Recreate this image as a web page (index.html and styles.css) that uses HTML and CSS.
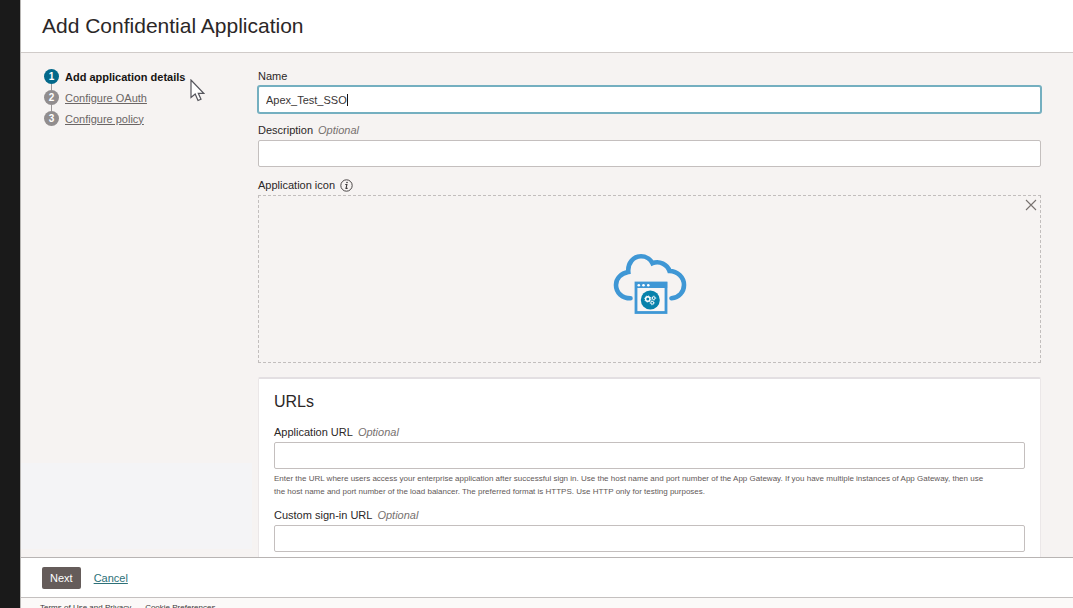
FILE: index.html
```html
<!DOCTYPE html>
<html lang="en">
<head>
<meta charset="utf-8">
<title>Add Confidential Application</title>
<meta name="viewport" content="width=device-width, initial-scale=1">
<link rel="stylesheet" href="styles.css">
</head>
<body class="page">
<div class="panel">
  <header class="panel-header">
    <h1 class="title">Add Confidential Application</h1>
  </header>
  <div class="workspace">
    <nav class="sidebar" aria-label="Steps">
      <ol class="steps">
        <li class="step step-current" aria-current="step"><span class="step-number">1</span><span class="step-name">Add application details</span></li>
        <li class="step"><span class="step-number">2</span><a class="step-name" href="#oauth">Configure OAuth</a></li>
        <li class="step"><span class="step-number">3</span><a class="step-name" href="#policy">Configure policy</a></li>
      </ol>
      <svg class="pointer" width="15" height="23" viewBox="0 0 15 23" aria-hidden="true">
        <path d="M1 1V18.500L5.200 15L8 21.500L11 20.200L8.300 14.300H13.700Z" fill="#fff" stroke="#55555c" stroke-width="1.200"/>
      </svg>
    </nav>
    <main class="form">
      <div class="field">
        <label class="label" for="name">Name</label>
        <div class="input input-focused"><input class="input-inner" id="name" type="text" value="Apex_Test_SSO" size="13"><span class="caret"></span></div>
      </div>
      <div class="field">
        <label class="label" for="description">Description <em class="optional">Optional</em></label>
        <input class="input" id="description" type="text">
      </div>
      <div class="field field-icon">
        <div class="label" id="icon-label">Application icon
          <svg class="info" width="13" height="13" viewBox="0 0 13 13" role="img" aria-label="Information">
            <circle cx="6.500" cy="6.500" r="5.700" fill="none" stroke="#4a4646"/>
            <circle cx="7" cy="3.500" r=".8" fill="#3a3636"/>
            <path d="M5.300 5.500H6.900L6 9.400H7.600" fill="none" stroke="#3a3636" stroke-width="1.100"/>
          </svg>
        </div>
        <div class="dropzone" role="group" aria-labelledby="icon-label">
          <svg class="app-icon" width="74" height="62" viewBox="23 13 74 62" aria-hidden="true">
            <path d="M40.500 58.300C32 58.300 26 52.500 26 45C26 38.300 31 33.300 38.300 32C37.500 23 43.500 16.300 51 16.300C57 16.300 61 20 62.500 23.200C69.500 20.300 77.500 24.500 79.500 31C87.500 31 94 37.500 94 45C94 52 89 57.500 81.500 58.300" fill="none" stroke="#3f97d5" stroke-width="4.600" stroke-linecap="round" stroke-linejoin="miter"/>
            <rect x="46" y="43" width="30" height="29.500" fill="#f8f6f5" stroke="#3f97d5" stroke-width="2.800"/>
            <path d="M45 42H77.200V48H45Z" fill="#3f97d5"/>
            <g fill="#fff"><circle cx="48.800" cy="45.300" r="1.300"/><circle cx="53.500" cy="45.300" r="1.300"/><circle cx="58.300" cy="45.300" r="1.300"/></g>
            <circle cx="60.300" cy="60" r="9.500" fill="#0782ab"/>
            <g fill="none" stroke="#fff">
              <circle cx="57.800" cy="59" r="2.200" stroke-width="1.400"/>
              <circle cx="57.800" cy="59" r="3.100" stroke-width=".8" stroke-dasharray="1.200 1.200"/>
              <circle cx="63.700" cy="58.100" r="1.400"/>
              <circle cx="63.700" cy="58.100" r="2.100" stroke-width=".6" stroke-dasharray=".8 .8"/>
              <circle cx="62.200" cy="62.800" r="1.400"/>
              <circle cx="62.200" cy="62.800" r="2.100" stroke-width=".6" stroke-dasharray=".8 .8"/>
            </g>
          </svg>
          <button class="clear" type="button" aria-label="Remove icon">
            <svg width="12" height="12" viewBox="0 0 12 12" aria-hidden="true"><path d="M1 1L11 11M11 1L1 11" stroke="#77716e" stroke-width="1.100"/></svg>
          </button>
        </div>
      </div>
      <section class="card">
        <h2 class="card-title">URLs</h2>
        <div class="field">
          <label class="label" for="app-url">Application URL <em class="optional">Optional</em></label>
          <input class="input" id="app-url" type="text" aria-describedby="app-url-help">
          <p class="help" id="app-url-help">Enter the URL where users access your enterprise application after successful sign in. Use the host name and port number of the App Gateway. If you have multiple instances of App Gateway, then use the host name and port number of the load balancer. The preferred format is HTTPS. Use HTTP only for testing purposes.</p>
        </div>
        <div class="field">
          <label class="label" for="signin-url">Custom sign-in URL <em class="optional">Optional</em></label>
          <input class="input" id="signin-url" type="text">
        </div>
      </section>
    </main>
  </div>
  <div class="actions">
    <button class="next" type="button">Next</button>
    <a class="cancel" href="#cancel">Cancel</a>
  </div>
  <footer class="legal">
    <a class="legal-link" href="#terms">Terms of Use and Privacy</a>
    <a class="legal-link" href="#cookies">Cookie Preferences</a>
  </footer>
</div>
</body>
</html>
```
FILE: styles.css
```css
* { box-sizing: border-box; }

.page {
  margin: 0;
  height: 100vh;
  overflow: hidden;
  padding-left: 20px;
  background: #1a1a1a;
  color: #2b2727;
  font: 11px/14px "Liberation Sans", Arial, sans-serif;
}

.panel {
  display: flex;
  flex-direction: column;
  height: 100%;
  border-left: 1px solid #b8b6b4;
  background: #fff;
}

.panel-header {
  flex: none;
  padding: 12px 21px;
  border-bottom: 1px solid #d0cbc9;
}

.title {
  margin: 0;
  font-size: 21px;
  line-height: 28px;
  font-weight: 400;
}

.workspace {
  flex: 1;
  min-height: 0;
  overflow: hidden;
  display: grid;
  grid-template-columns: 237px 1fr;
  grid-template-rows: 100%;
  background: #f6f3f2;
}

.sidebar {
  position: relative;
  padding: 16px 21px;
  background: linear-gradient(#f4f4f6, #f4f4f6) left bottom 8px / 231px 86px no-repeat;
}

.steps {
  display: flex;
  flex-direction: column;
  gap: 6px;
  margin: 0;
  padding: 0;
  list-style: none;
}

.step {
  position: relative;
  display: flex;
  align-items: center;
  gap: 6px;
  height: 15px;
  padding-left: 2px;
}

.step + .step::before {
  content: "";
  position: absolute;
  left: 9px;
  top: -6px;
  height: 6px;
  border-left: 1px solid #9a9696;
}

.step-number {
  width: 15px;
  height: 15px;
  border-radius: 50%;
  background: #918d8e;
  color: #fff;
  font-weight: 700;
  font-size: 10px;
  line-height: 15px;
  text-align: center;
}

.step-name { color: #6b6665; }

.step-current .step-number { background: #03688a; }

.step-current .step-name {
  color: #161313;
  font-weight: 700;
}

.pointer {
  position: absolute;
  left: 169px;
  top: 26px;
}

.form {
  padding: 16px 32px 0 0;
  min-width: 0;
}

.field {
  display: flex;
  flex-direction: column;
  gap: 3px;
  margin-bottom: 10px;
}

.label {
  display: flex;
  align-items: center;
  gap: 5px;
  height: 14px;
}

.optional { color: #77716f; }

.input {
  width: 100%;
  height: 27px;
  padding: 0 7px;
  border: 1px solid #c4bfbe;
  border-radius: 2px;
  background: #fff;
  color: #3a3636;
  font: inherit;
}

.input-focused {
  display: flex;
  align-items: center;
  border-color: #74afc0;
  box-shadow: 0 0 0 1px #74afc0;
}

.input-inner {
  field-sizing: content;
  padding: 0;
  border: 0;
  outline: 0;
  background: none;
  color: inherit;
  font: inherit;
}

.caret {
  height: 12px;
  border-left: 1px solid #161313;
}

.field-icon { margin: 11px 0 14px; }

.dropzone {
  position: relative;
  display: flex;
  justify-content: center;
  padding: 57px 0 47px;
  border: 1px dashed #c2bebd;
}

.app-icon { display: block; }

.clear {
  position: absolute;
  top: 3px;
  right: 3px;
  display: flex;
  padding: 0;
  border: 0;
  background: none;
}

.card {
  padding: 13px 15px 16px;
  border: 1px solid #ebe7e8;
  border-top: 2px solid #e3dfe2;
  border-radius: 2px;
  background: #fff;
}

.card-title {
  margin: 0 0 13px;
  font-size: 16px;
  line-height: 20px;
  font-weight: 400;
}

.help {
  margin: 0;
  padding-right: 32px;
  color: #5f5958;
  font-size: 8px;
  line-height: 13px;
}

.actions {
  flex: none;
  display: flex;
  align-items: center;
  gap: 13px;
  height: 41px;
  padding: 0 21px;
  border-top: 1px solid #b8b4b3;
  border-bottom: 1px solid #c4c0bf;
}

.next {
  padding: 4px 8px;
  border: 0;
  border-radius: 2px;
  background: #655c5a;
  color: #fff;
  font: inherit;
}

.cancel { color: #2d7078; }

.legal {
  flex: none;
  display: flex;
  gap: 14px;
  height: 10px;
  padding: 5px 19px 0;
  overflow: hidden;
  background: #fbf9f8;
  font-size: 8px;
  line-height: 10px;
}

.legal-link {
  color: #3a3636;
  text-decoration: none;
}
```
